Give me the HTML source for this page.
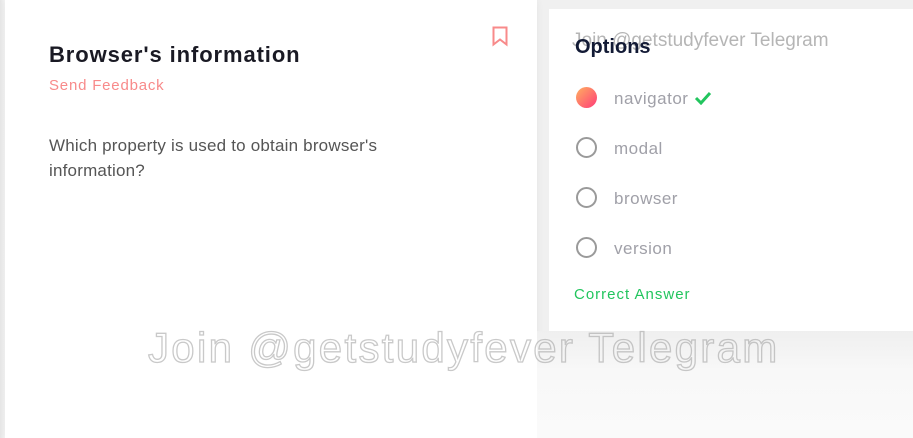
<!DOCTYPE html>
<html><head><style>
*{margin:0;padding:0;box-sizing:border-box}
body{width:913px;height:438px;overflow:hidden;background:#f0f0f0;font-family:"Liberation Sans",sans-serif;position:relative}
.lstrip{position:absolute;left:0;top:0;width:6px;height:438px;background:linear-gradient(90deg,#e6e6e6,#f7f7f7)}
.left{position:absolute;left:5px;top:0;width:532px;height:438px;background:#fff;box-shadow:0 0 8px rgba(0,0,0,.05)}
.right{position:absolute;left:549px;top:9px;width:364px;height:322px;background:#fff}
.below{position:absolute;left:537px;top:331px;width:376px;height:107px;background:linear-gradient(180deg,#efefef 0,#f8f8f8 40px,#fafafa)}
h1{position:absolute;left:49px;top:42px;font-size:22px;font-weight:bold;color:#1a1a24;letter-spacing:.9px}
.fb{position:absolute;left:49px;top:77px;font-size:15px;color:#f88a8a;letter-spacing:.8px}
.q{position:absolute;left:49px;top:133px;font-size:17px;line-height:25px;color:#555;width:400px;letter-spacing:.2px}
.opt{position:absolute;left:575px;top:36px;font-size:20px;font-weight:bold;color:#121a35}
.wm1{position:absolute;left:572px;top:30px;font-size:19px;color:rgba(120,120,120,.55)}
.o{position:absolute;left:576px;font-size:17px;color:#a0a0a8;letter-spacing:.5px}
.o i{position:absolute;left:0;top:0;width:21px;height:21px;border:2px solid #9a9a9a;border-radius:50%}
.o span{position:absolute;left:38px;top:2px;white-space:nowrap}
.ca{position:absolute;left:574px;top:286px;font-size:15px;color:#22c55e;letter-spacing:1px}
.wm{position:absolute;left:148px;top:324px;font-size:42px;font-weight:normal;color:transparent;-webkit-text-stroke:1.3px rgba(165,165,165,.6);white-space:nowrap;letter-spacing:2.3px}
</style></head><body>
<div class="lstrip"></div>
<div class="left"></div>
<div class="right"></div>
<div class="below"></div>
<svg style="position:absolute;left:492px;top:26px" width="17" height="21" viewBox="0 0 17 21"><path d="M1.5 1.5h13v17l-6.5-5-6.5 5z" fill="none" stroke="#f88a8a" stroke-width="2"/></svg>
<h1>Browser's information</h1>
<div class="fb">Send Feedback</div>
<div class="q">Which property is used to obtain browser's information?</div>
<div class="wm1">Join @getstudyfever Telegram</div>
<div class="opt">Options</div>
<div class="o" style="top:87px"><i style="border:none;background:linear-gradient(135deg,#ffb060,#ff3c78)"></i><span>navigator <svg width="18" height="14" viewBox="0 0 18 14" style="vertical-align:-1px"><path d="M2 7l5 5 9-10" fill="none" stroke="#22c55e" stroke-width="3"/></svg></span></div>
<div class="o" style="top:137px"><i></i><span>modal</span></div>
<div class="o" style="top:187px"><i></i><span>browser</span></div>
<div class="o" style="top:237px"><i></i><span>version</span></div>
<div class="ca">Correct Answer</div>
<div class="wm">Join @getstudyfever Telegram</div>
</body></html>
